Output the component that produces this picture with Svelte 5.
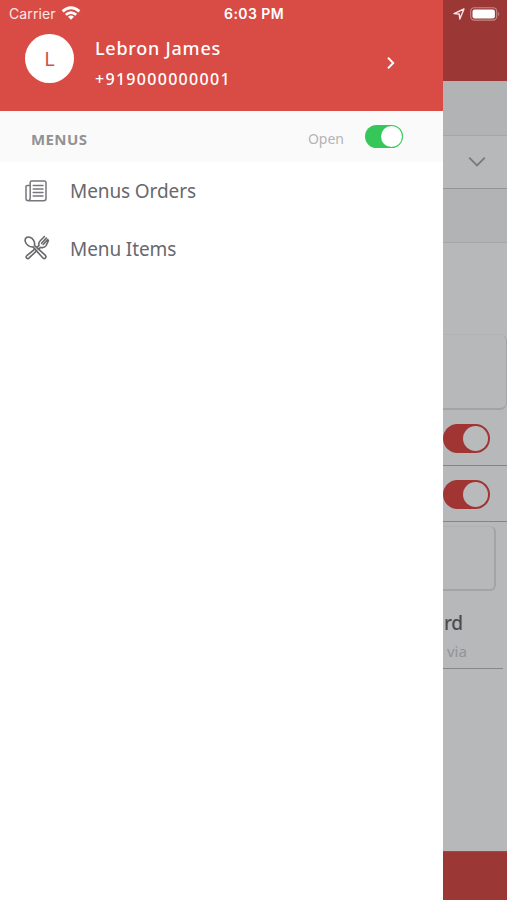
<script lang="ts">
  let open = $state(true);

  const user = { name: 'Lebron James', phone: '+919000000001' };
  const items = [
    { id: 'orders', label: 'Menus Orders' },
    { id: 'items', label: 'Menu Items' }
  ];
</script>

<div class="screen">
  <div class="statusbar">
    <span class="carrier">Carrier</span>
    <svg class="wifi" width="20" height="14" viewBox="0 0 20 14" fill="none" stroke="#fff" stroke-width="2.8">
      <path d="M1.6 5.4Q10 -2 18.4 5.4" />
      <path d="M4.8 8.8Q10 4.4 15.2 8.8" />
      <path d="M10 13.8L7 10.8Q10 8.4 13 10.8Z" fill="#fff" stroke="none" />
    </svg>
    <span class="time">6:03 PM</span>
    <svg class="location" width="12" height="12" viewBox="0 0 12 12" fill="none" stroke="#f7e6e5" stroke-width="1.4" stroke-linejoin="round">
      <path d="M1 5.6L11 1L6.8 11L6.2 6Z" />
    </svg>
    <svg class="battery" width="30" height="14" viewBox="0 0 30 14">
      <rect x=".7" y=".7" width="26" height="12.4" rx="3.6" fill="none" stroke="#c58987" stroke-width="1.1" />
      <rect x="2.5" y="2.4" width="22.4" height="9" rx="2.2" fill="#fff" />
      <path d="M28.2 4.8q2 2 0 4.4z" fill="#c58987" />
    </svg>
  </div>

  <aside class="drawer">
    <header class="profile">
      <span class="avatar">L</span>
      <div class="who">
        <span class="name">{user.name}</span>
        <span class="phone">{user.phone}</span>
      </div>
      <svg class="chevron" width="10" height="14" viewBox="0 0 10 14" fill="none" stroke="#fff" stroke-width="2">
        <path d="M2 1.6L7.2 7L2 12.4" />
      </svg>
    </header>

    <div class="section">
      <span class="title">MENUS</span>
      <span class="state">Open</span>
      <button type="button" class="switch" class:on={open} aria-label="Open" onclick={() => (open = !open)}>
        <span class="knob"></span>
      </button>
    </div>

    <nav>
      {#each items as item (item.id)}
        <div class="item">
          {#if item.id === 'orders'}
            <svg width="26" height="26" viewBox="0 0 26 26" fill="none" stroke="#77777c" stroke-width="1.5" stroke-linecap="round" stroke-linejoin="round">
              <path d="M6.2 20V4.4Q6.2 2.9 7.7 2.9H20.3Q22 2.9 22 4.6V20.6Q22 22.7 19.9 22.7H4.2Q2 22.7 2 20.5V8.6Q2 7.5 3.2 7.5H6.2M6.2 19.5Q6.2 22.7 4.2 22.7" />
              <path d="M9.2 7.5H19M9.2 11H19M9.2 14.5H19M9.2 18H19" />
            </svg>
          {:else}
            <svg width="26" height="26" viewBox="0 0 26 26" fill="none" stroke="#68686d" stroke-width="1.6" stroke-linecap="round" stroke-linejoin="round">
              <path d="M10.4 10.4L21.4 20.4Q22.6 22 21.3 23.1Q20 24.2 18.7 22.8L9 11.9C5.8 12.3 2.2 9.8 1.3 6.6C.5 3.2 2.6 1.4 5.8 2.3C9.3 3.4 11.3 7.1 10.4 10.4Z" />
              <path d="M10.8 14.2L2.8 20.7Q1.5 22 2.6 23.1Q3.9 24.3 5.1 22.9L12.6 15.8M12.8 12.4L15 10.6C14.2 8.4 15 7 16.5 5.5L20.4 1.5M14.4 14.2L16.6 12.4C19.3 13.2 20.8 12.4 22.1 10.6L24.4 5.7M17.6 8.3L22.3 3M19.2 9.5L23.8 4.4" />
            </svg>
          {/if}
          <span class="label">{item.label}</span>
        </div>
      {/each}
    </nav>
  </aside>

  <main class="page">
    <div class="appbar"></div>
    <div class="row first"></div>
    <div class="row select">
      <svg width="18" height="12" viewBox="0 0 18 12" fill="none" stroke="#77797b" stroke-width="1.8">
        <path d="M1.2 1.6L9 9.4L16.8 1.6" />
      </svg>
    </div>
    <div class="row third"></div>
    <div class="textarea"></div>
    <div class="row toggle"><span class="pill"><span class="dot"></span></span></div>
    <div class="row toggle"><span class="pill"><span class="dot"></span></span></div>
    <div class="box"></div>
    <div class="payment">
      <span class="card">rd</span>
      <span class="via">via</span>
    </div>
    <div class="bottom"></div>
  </main>
</div>

<style>
:global(body){margin:0;background:#fff}
.screen{position:relative;display:flex;width:507px;height:900px;overflow:hidden;font-family:"Noto Sans","Open Sans",sans-serif;background:#fff}
.statusbar{position:absolute;top:0;left:0;right:0;height:27px;box-sizing:border-box;padding:0 7px 0 9px;display:grid;grid-template-columns:52px 163px 229px 17px 30px;align-items:center;z-index:2;color:#fbe7e5;font:14px/27px Inter,sans-serif}
.carrier{letter-spacing:.1px;white-space:nowrap}
.wifi{margin-top:-1px}
.time{color:#fff;font-weight:600;white-space:nowrap;letter-spacing:.45px}

.drawer{width:443px;flex:none;background:#fff}
.profile{height:111px;box-sizing:border-box;padding:34px 47px 0 25px;display:flex;align-items:flex-start;background:#d84c45;color:#fff;box-shadow:0 1px #ec8f89}
.avatar{width:49px;height:49px;border-radius:50%;background:#fff;color:#d0524c;font-size:20px;line-height:50px;text-align:center;flex:none}
.who{display:flex;flex-direction:column;margin-left:21px;flex:1}
.name{font-size:18px;line-height:28px;font-weight:500;letter-spacing:.75px}
.phone{font-size:16px;line-height:34px;font-weight:500;letter-spacing:1.3px}
.chevron{margin:22px 0 0}
.section{height:51px;box-sizing:border-box;padding:0 40px 0 31px;display:flex;align-items:center;background:#fafafa}
.title{flex:1;color:#929294;font-size:15px;font-weight:700;padding-top:4px;letter-spacing:.4px}
.state{color:#b4b4b6;font-size:14px;padding-top:4px}
.switch{width:38px;height:23px;margin:0 0 0 21px;padding:1px;border:0;border-radius:12px;background:#d8d8da;display:flex}
.switch.on{background:#35c759;justify-content:flex-end}
.knob{width:21px;height:21px;border-radius:50%;background:#fff}
.item{height:57.5px;display:flex;align-items:center;padding-left:24px}
.item svg{flex:none}
.label{margin-left:20px;padding-top:1px;font-size:19px;color:#68686e;letter-spacing:-.1px}

.page{flex:1;display:flex;flex-direction:column;background:#b6b8ba;min-width:0}
.appbar{height:81px;background:#9b3836}
.row{box-sizing:border-box;border-bottom:1px solid #a4a6a8}
.first{height:55px;background:#b1b3b5}
.select{height:53px;border-color:#929496;display:flex;align-items:center;padding-left:25px}
.third{height:54px;background:#b1b3b5}
.textarea{height:76px;margin-top:91px;box-sizing:border-box;border:1px solid #b0b2b4;border-left:0;border-right-color:#a4a6a8;border-bottom:2px solid #a1a3a5;border-radius:0 7px 7px 0}
.toggle{height:56px;box-sizing:border-box;padding-top:2px;border-color:#828486;display:flex;align-items:center;overflow:hidden}
.pill{width:47px;height:29px;flex:none;box-sizing:border-box;border-radius:15px;background:#a03533;padding:2px;display:flex;justify-content:flex-end}
.dot{width:25px;height:25px;border-radius:50%;background:#b8babc}
.box{height:65px;margin:4px 11px 0 0;box-sizing:border-box;border:1px solid #adafb1;border-left:0;border-right:2px solid #a2a4a6;border-bottom:2px solid #a2a4a6;border-radius:0 6px 6px 0}
.payment{height:78px;margin-right:4px;box-sizing:border-box;border-bottom:1px solid #858789;padding-top:19px;display:flex;flex-direction:column}
.card{font-size:19px;line-height:27px;font-weight:500;color:#4c4d50;padding-left:1px;letter-spacing:-.3px}
.via{font-size:15px;line-height:28px;color:#929496;padding-left:4px}
.bottom{margin-top:auto;height:49px;box-sizing:border-box;background:#9b3836;border-top:1px solid #8b5150}
</style>
